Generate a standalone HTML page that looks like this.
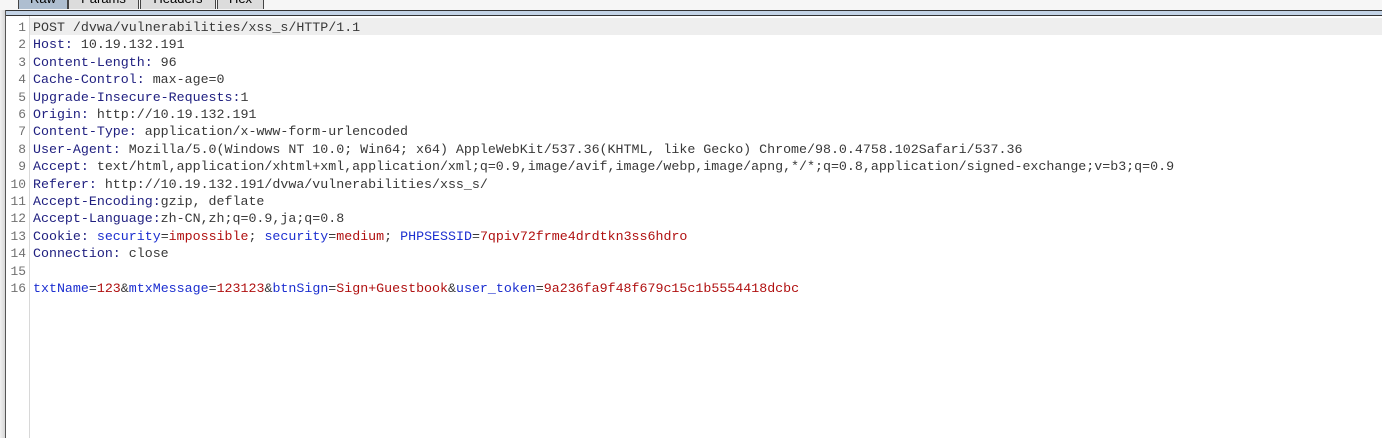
<!DOCTYPE html>
<html><head><style>
body{margin:0;width:1382px;height:438px;overflow:hidden;background:#fff;position:relative;font-family:"Liberation Mono",monospace;}
.top{position:absolute;left:0;top:0;width:1382px;height:10px;background:#f6f6f6}
.tab{position:absolute;top:-8px;height:17px;border:1px solid #444;border-bottom:none;background:#dcdcdc;font:13px "Liberation Sans",sans-serif;color:#000;text-align:center;line-height:12px;box-sizing:border-box}
.band{position:absolute;left:5px;top:10px;width:1377px;height:6px;background:#c3d3e6;border-top:1px solid #333;border-bottom:1px solid #333;box-sizing:border-box}
.lb{position:absolute;left:0;top:10px;width:5px;height:428px;background:linear-gradient(90deg,#f0f0f0,#d8d8d8)}
.lbl{position:absolute;left:5px;top:10px;width:1px;height:428px;background:#555}
.sep{position:absolute;left:29px;top:16px;width:1px;height:422px;background:#d8d8d8}
.hl{position:absolute;left:30px;top:18px;width:1352px;height:17px;background:#eeeeee}
.code{position:absolute;left:6px;top:19px;font-size:13.3px;line-height:17.4px;white-space:pre;color:#383838}
.n{display:inline-block;width:20px;text-align:right;color:#707070;margin-right:7px;font-size:12.9px}
.h{color:#202080}.k{color:#1c2fd0}.v{color:#b01010}
</style></head><body>
<div class="top"></div>
<div class="tab" style="left:18px;width:50px;background:#aebed0">Raw</div>
<div class="tab" style="left:68px;width:71px">Params</div>
<div class="tab" style="left:140px;width:76px">Headers</div>
<div class="tab" style="left:217px;width:47px">Hex</div>
<div class="band"></div>
<div class="lb"></div><div class="lbl"></div>
<div class="hl"></div>
<div class="sep"></div>
<div class="code"><span class="n">1</span>POST /dvwa/vulnerabilities/xss_s/HTTP/1.1
<span class="n">2</span><span class="h">Host:</span> 10.19.132.191
<span class="n">3</span><span class="h">Content-Length:</span> 96
<span class="n">4</span><span class="h">Cache-Control:</span> max-age=0
<span class="n">5</span><span class="h">Upgrade-Insecure-Requests:</span>1
<span class="n">6</span><span class="h">Origin:</span> http://10.19.132.191
<span class="n">7</span><span class="h">Content-Type:</span> application/x-www-form-urlencoded
<span class="n">8</span><span class="h">User-Agent:</span> Mozilla/5.0(Windows NT 10.0; Win64; x64) AppleWebKit/537.36(KHTML, like Gecko) Chrome/98.0.4758.102Safari/537.36
<span class="n">9</span><span class="h">Accept:</span> text/html,application/xhtml+xml,application/xml;q=0.9,image/avif,image/webp,image/apng,*/*;q=0.8,application/signed-exchange;v=b3;q=0.9
<span class="n">10</span><span class="h">Referer:</span> http://10.19.132.191/dvwa/vulnerabilities/xss_s/
<span class="n">11</span><span class="h">Accept-Encoding:</span>gzip, deflate
<span class="n">12</span><span class="h">Accept-Language:</span>zh-CN,zh;q=0.9,ja;q=0.8
<span class="n">13</span><span class="h">Cookie:</span> <span class="k">security</span>=<span class="v">impossible</span>; <span class="k">security</span>=<span class="v">medium</span>; <span class="k">PHPSESSID</span>=<span class="v">7qpiv72frme4drdtkn3ss6hdro</span>
<span class="n">14</span><span class="h">Connection:</span> close
<span class="n">15</span>
<span class="n">16</span><span class="k">txtName</span>=<span class="v">123</span>&amp;<span class="k">mtxMessage</span>=<span class="v">123123</span>&amp;<span class="k">btnSign</span>=<span class="v">Sign+Guestbook</span>&amp;<span class="k">user_token</span>=<span class="v">9a236fa9f48f679c15c1b5554418dcbc</span></div>
</body></html>
